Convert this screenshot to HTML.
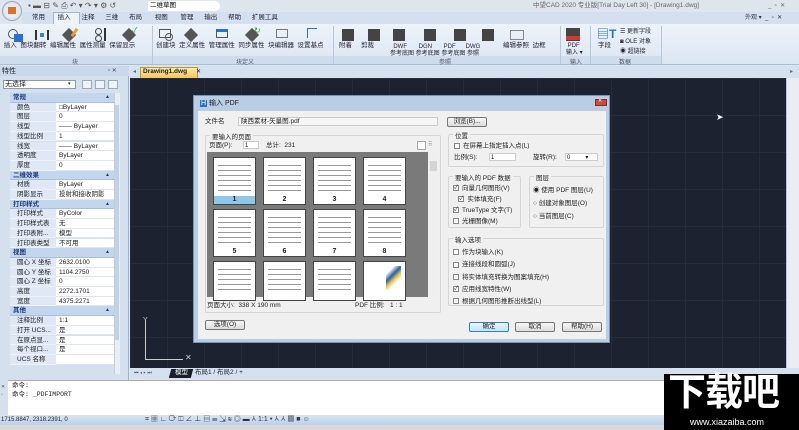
<!DOCTYPE html>
<html><head><meta charset="utf-8"><style>
*{margin:0;padding:0;box-sizing:border-box}
body{width:799px;height:430px;overflow:hidden;position:relative;background:#dfe5ee;font-family:"Liberation Sans","Noto Sans CJK SC",sans-serif;font-size:7px;color:#222}
.a{position:absolute}
.t{position:absolute;white-space:nowrap;line-height:1}
.ib{position:absolute;width:14px;height:12px}
.gl{position:absolute;top:57px;height:7px;font-size:6px;color:#556;text-align:center}
.sep{position:absolute;top:26px;width:1px;height:38px;background:#b8c8dc}
.row{position:absolute;left:10px;width:104px;height:9.7px;font-size:6.5px;line-height:9.7px}
.row .l{position:absolute;left:0;width:46px;height:100%;background:#dfe8f4;padding-left:7px;border-bottom:1px solid #eef3fa}
.row .v{position:absolute;left:46px;width:58px;height:100%;background:#fff;padding-left:3px;border-bottom:1px solid #dde5ef}
.row.h{background:#c3d6ee;color:#1a3a7a;font-weight:bold;padding-left:3px;border-bottom:1px solid #aabfdc}
.thumb{position:absolute;width:43px;height:48px;background:#fff;border:1px solid #444}
.thumb i{position:absolute;left:4px;right:4px;top:4px;bottom:10px;background:repeating-linear-gradient(#fff 0 3px,#999 3px 4px,#fff 4px 5px)}
.thumb b{position:absolute;bottom:0;width:100%;text-align:center;font-size:7px;line-height:8px}
.grp{position:absolute;border:1px solid #d5d5d5;border-radius:2px}
.grp>span.c{position:absolute;top:-5px;left:4px;background:#f0f0f0;padding:0 2px;font-size:6.5px}
.cb{display:inline-block;width:6px;height:6px;border:1px solid #888;background:#fff;vertical-align:middle;margin-right:3px;font-size:6px;line-height:4px;color:#335;text-align:center}
.btn{position:absolute;height:10px;border:1px solid #777;border-radius:2px;background:linear-gradient(#f6f6f6,#dcdcdc);font-size:6.5px;text-align:center;line-height:8px}
</style></head><body>
<!-- title bar -->
<div class="a" style="left:0;top:0;width:799px;height:12px;background:#dde5ef"></div>
<div class="a" style="left:2px;top:1px;width:20px;height:20px;border-radius:50%;background:radial-gradient(#fff,#c9d6e6);border:1px solid #9ab"></div>
<div class="a" style="left:8px;top:7px;width:8px;height:7px;background:#e07020"></div>
<div class="t" style="left:28px;top:2px;font-size:8px;color:#555">▪ ▬ ⊟ ✎ ⎙ ↶ ▾ ↷ ▾ ⚙ ↺</div>
<div class="a" style="left:148px;top:1px;width:72px;height:10px;background:#fff;border-radius:0 5px 5px 0"></div>
<div class="t" style="left:150px;top:3px;font-size:6.5px;color:#000">二维草图</div>
<div class="t" style="left:533px;top:3px;font-size:6.5px;color:#666">中望CAD 2020 专业版[Trial Day Left 30] - [Drawing1.dwg]</div>
<div class="t" style="left:768px;top:3px;font-size:6px;color:#666">_ &nbsp;▫ &nbsp;✕</div>
<!-- tabs -->
<div class="a" style="left:22px;top:12px;width:777px;height:12px;background:#d4e0ef"></div>
<div class="a" style="left:53px;top:12px;width:27px;height:12px;background:#eef3fa;border:1px solid #9fb4cf;border-bottom:none"></div>
<div class="t" style="left:32px;top:15px;font-size:6.5px;color:#223">常用&nbsp;&nbsp;&nbsp;&nbsp;&nbsp;&nbsp;&nbsp;插入&nbsp;&nbsp;&nbsp;&nbsp;&nbsp;&nbsp;注释&nbsp;&nbsp;&nbsp;&nbsp;&nbsp;&nbsp;三维&nbsp;&nbsp;&nbsp;&nbsp;&nbsp;&nbsp;布局&nbsp;&nbsp;&nbsp;&nbsp;&nbsp;&nbsp;&nbsp;视图&nbsp;&nbsp;&nbsp;&nbsp;&nbsp;&nbsp;&nbsp;管理&nbsp;&nbsp;&nbsp;&nbsp;&nbsp;&nbsp;输出&nbsp;&nbsp;&nbsp;&nbsp;&nbsp;&nbsp;帮助&nbsp;&nbsp;&nbsp;&nbsp;&nbsp;&nbsp;扩展工具</div>
<div class="t" style="left:745px;top:15px;font-size:6px;color:#334">外观 ▾ &nbsp;_ &nbsp;▫ &nbsp;✕</div>
<!-- ribbon -->
<div class="a" style="left:0;top:24px;width:799px;height:41px;background:linear-gradient(#eef3fa,#dbe6f3);border-bottom:1px solid #a9bdd6"></div>
<div class="a" style="left:0;top:56px;width:661px;height:8px;background:#cfdcec"></div>
<div class="sep" style="left:152px"></div><div class="sep" style="left:333px"></div><div class="sep" style="left:560px"></div><div class="sep" style="left:590px"></div><div class="sep" style="left:661px"></div>
<div class="gl" style="left:60px;width:30px">块</div>
<div class="gl" style="left:225px;width:40px">块定义</div>
<div class="gl" style="left:430px;width:30px">参照</div>
<div class="gl" style="left:562px;width:28px">输入</div>
<div class="gl" style="left:610px;width:30px">数据</div>
<!-- ribbon icons -->
<div class="ib" style="left:8px;top:29px;border:1px solid #555;border-radius:50%;width:10px;height:10px"></div><div class="ib" style="left:14px;top:34px;width:9px;height:8px;background:#2a6fd8"></div>
<div class="ib" style="left:35px;top:30px;width:14px;height:10px;border-left:2px solid #333;border-right:2px solid #333"></div><div class="a" style="left:40px;top:33px;width:4px;height:4px;background:#3a7de0"></div>
<div class="ib" style="left:64px;top:30px;width:10px;height:10px;background:#555;transform:rotate(45deg)"></div><div class="a" style="left:73px;top:28px;width:3px;height:9px;background:#e9a030;transform:rotate(35deg)"></div>
<div class="ib" style="left:95px;top:28px;width:7px;height:7px;border:1px solid #444;border-radius:50%"></div><div class="a" style="left:95px;top:35px;width:7px;height:7px;border:1px solid #444;border-radius:50%"></div><div class="a" style="left:104px;top:28px;width:2px;height:13px;background:#333"></div>
<div class="ib" style="left:124px;top:30px;width:10px;height:10px;background:#555;transform:rotate(45deg)"></div><div class="t" style="left:132px;top:27px;color:#2a2;font-size:8px">✓</div>
<div class="t" style="left:2px;top:43px;font-size:6.5px;color:#223">&nbsp;插入&nbsp;&nbsp;图块翻转&nbsp;&nbsp;编辑属性&nbsp;&nbsp;属性测量&nbsp;&nbsp;保留显示</div>
<div class="ib" style="left:159px;top:29px;border:1px solid #555;width:12px;height:9px"></div><div class="a" style="left:165px;top:33px;width:8px;height:8px;border:1px solid #555;border-radius:50%"></div>
<div class="ib" style="left:186px;top:30px;width:10px;height:10px;background:#555;transform:rotate(45deg)"></div>
<div class="ib" style="left:216px;top:29px;border:1px solid #555;width:12px;height:9px;border-top:3px solid #2a6fd8"></div>
<div class="ib" style="left:247px;top:30px;width:10px;height:10px;background:#555;transform:rotate(45deg)"></div><div class="t" style="left:254px;top:27px;color:#2a2;font-size:8px">↻</div>
<div class="ib" style="left:276px;top:29px;border:1px solid #777;width:12px;height:9px"></div>
<div class="ib" style="left:307px;top:28px;border-top:1px solid #2a6fd8;border-left:1px solid #2a6fd8;width:10px;height:10px"></div>
<div class="t" style="left:156px;top:43px;font-size:6.5px;color:#223">创建块&nbsp;&nbsp;定义属性&nbsp;&nbsp;管理属性&nbsp;&nbsp;同步属性&nbsp;&nbsp;块编辑器&nbsp;&nbsp;设置基点</div>
<div class="ib" style="left:342px;top:29px;background:#444;width:12px;height:12px"></div>
<div class="ib" style="left:368px;top:29px;background:#444;width:12px;height:12px"></div>
<div class="ib" style="left:393px;top:29px;background:#444;width:12px;height:12px"></div>
<div class="ib" style="left:424px;top:29px;background:#444;width:12px;height:12px"></div>
<div class="ib" style="left:454px;top:29px;background:#444;width:12px;height:12px"></div>
<div class="ib" style="left:482px;top:29px;background:#444;width:12px;height:12px"></div>
<div class="ib" style="left:510px;top:30px;border:1px solid #888;width:14px;height:10px"></div>
<div class="t" style="left:339px;top:43px;font-size:6.5px;color:#223">附着&nbsp;&nbsp;&nbsp;&nbsp;&nbsp;剪裁</div>
<div class="t" style="left:390px;top:44px;font-size:6px;color:#223;line-height:1.2">&nbsp;&nbsp;DWF&nbsp;&nbsp;&nbsp;&nbsp;&nbsp;&nbsp;&nbsp;DGN&nbsp;&nbsp;&nbsp;&nbsp;&nbsp;&nbsp;&nbsp;PDF&nbsp;&nbsp;&nbsp;&nbsp;&nbsp;&nbsp;DWG<br>参考底图 参考底图 参考底图&nbsp;参照</div>
<div class="t" style="left:503px;top:43px;font-size:6.5px;color:#223">编辑参照&nbsp;&nbsp;边框</div>
<div class="ib" style="left:566px;top:28px;background:#444;width:14px;height:13px"></div><div class="a" style="left:566px;top:36px;width:14px;height:4px;background:#d33"></div>
<div class="t" style="left:566px;top:43px;font-size:6px;color:#223;line-height:1.2">&nbsp;PDF<br>输入 ▾</div>
<div class="t" style="left:597px;top:28px;font-size:12px;color:#2a6fd8;font-weight:bold">▤T</div>
<div class="t" style="left:598px;top:43px;font-size:6.5px">字段</div>
<div class="t" style="left:620px;top:27px;font-size:6px;color:#223;line-height:1.7">☰ 更新字段<br>◙ OLE 对象<br>◉ 超链接</div>
<!-- drawing tab bar -->
<div class="a" style="left:130px;top:66px;width:669px;height:12px;background:#d6e1ef"></div>
<div class="a" style="left:140px;top:67px;width:58px;height:11px;background:linear-gradient(#fde9a5,#f6c65a);border:1px solid #b89a40;border-bottom:none"></div>
<div class="t" style="left:143px;top:69px;font-size:6.5px;font-weight:bold;color:#222">Drawing1.dwg</div>
<div class="t" style="left:196px;top:69px;font-size:6px">✕</div>
<div class="t" style="left:133px;top:69px;font-size:6px;color:#667">◂</div>
<div class="t" style="left:790px;top:69px;font-size:6px;color:#667">▸</div>
<!-- left panel -->
<div class="a" style="left:0;top:66px;width:129px;height:314px;background:#d4e0ee;border-right:1px solid #9db3cf"></div>
<div class="a" style="left:0;top:66px;width:129px;height:10px;background:#c9d8ea"></div>
<div class="t" style="left:2px;top:68px;font-size:7px;color:#223">特性</div>
<div class="t" style="left:108px;top:68px;font-size:6px;color:#445">▫ ✕</div>
<div class="a" style="left:3px;top:80px;width:73px;height:9px;background:#fff;border:1px solid #8a9cb3"></div>
<div class="t" style="left:5px;top:81px;font-size:7px">无选择</div>
<div class="t" style="left:68px;top:82px;font-size:5px">▾</div>
<div class="a" style="left:82px;top:80px;width:10px;height:9px;border:1px solid #9ab;background:#eef3fa"></div>
<div class="a" style="left:95px;top:80px;width:10px;height:9px;border:1px solid #9ab;background:#eef3fa"></div>
<div class="a" style="left:108px;top:80px;width:10px;height:9px;border:1px solid #9ab;background:#eef3fa"></div>
<div class="a" style="left:114px;top:93px;width:6px;height:281px;background:#e8eef6;border-left:1px solid #c0cfe0"></div>
<div class="a" style="left:115px;top:105px;width:4px;height:235px;background:#c2d1e4"></div>
<div id="rows"></div>
<!-- canvas -->
<div class="a" style="left:130px;top:78px;width:656px;height:290px;background:#1d2230;background-image:linear-gradient(90deg,#262c3b 1px,transparent 1px),linear-gradient(#262c3b 1px,transparent 1px);background-size:37px 37px"></div>
<div class="a" style="left:786px;top:78px;width:13px;height:290px;background:#eaeef4;border-left:1px solid #b8c4d4"></div>
<div class="a" style="left:145px;top:320px;width:1px;height:40px;background:#ccc"></div>
<div class="a" style="left:145px;top:359px;width:38px;height:1px;background:#ccc"></div>
<div class="t" style="left:143px;top:317px;color:#ccc;font-size:7px">Y</div>
<div class="t" style="left:185px;top:354px;color:#ccc;font-size:8px">✕</div>
<div class="t" style="left:716px;top:113px;color:#fff;font-size:9px">➤</div>
<!-- layout tabs -->
<div class="a" style="left:130px;top:368px;width:669px;height:11px;background:#d6e1ef"></div>
<div class="t" style="left:134px;top:371px;font-size:5px;color:#446">⏮ ◂ ▸ ⏭</div>
<div class="a" style="left:170px;top:369px;width:22px;height:9px;background:#1b1f28;transform:skewX(-15deg)"></div>
<div class="t" style="left:175px;top:370px;font-size:6.5px;color:#fff">模型</div>
<div class="t" style="left:195px;top:370px;font-size:6.5px;color:#223">布局1 / 布局2 / +</div>
<!-- command -->
<div class="a" style="left:0;top:380px;width:799px;height:35px;background:#fff;border-top:1px solid #aab"></div>
<div class="a" style="left:0;top:380px;width:8px;height:35px;background:#d4e0ee"></div>
<div class="t" style="left:1px;top:383px;font-size:5px;color:#556;line-height:1.6">✕<br>▫</div>
<div class="t" style="left:12px;top:382px;font-size:6.5px;line-height:1.35;font-family:'Liberation Mono','Noto Sans CJK SC',monospace">命令:<br>命令: _PDFIMPORT</div>
<div class="a" style="left:0;top:415px;width:799px;height:10px;background:linear-gradient(#d9e5f3,#bcd0ea)"></div>
<div class="t" style="left:1px;top:417px;font-size:6px;color:#223">1715.8847, 2318.2391, 0</div>
<div class="t" style="left:145px;top:416px;font-size:7px;color:#334">⌗ ▦ ∟ ⟳ ◫ ∠ ⊥ ▤ ☰ ⇲ ≋ ◎ ▬ ⅄ 1:1 ▾ ⅄ ⅄ ▩ ■ ☺</div>
<div class="a" style="left:0;top:425px;width:799px;height:5px;background:#d8d8d8"></div>
<!-- watermark -->
<div class="a" style="left:664px;top:374px;width:135px;height:56px;background:#000"></div>
<div class="t" style="left:668px;top:374px;font-size:38px;font-weight:bold;color:#fff;letter-spacing:-1px">下载吧</div>
<div class="t" style="left:690px;top:418px;font-size:9px;color:#fff">www.xiazaiba.com</div>
<!-- dialog -->
<div class="a" style="left:193px;top:95px;width:417px;height:248px;background:#b9cde5;border:1px solid #7d93b3"></div>
<div class="t" style="left:200px;top:100px;font-size:7px;color:#222"><span style="background:#2a6fd8;color:#fff;padding:0 1px">H</span> 输入 PDF</div>
<div class="a" style="left:595px;top:99px;width:12px;height:7px;background:#d04a3a;border:1px solid #8a2a20"></div>
<div class="t" style="left:598px;top:99px;font-size:5px;color:#fff">✕</div>
<div class="a" style="left:198px;top:111px;width:408px;height:228px;background:#f0f0f0"></div>
<div class="t" style="left:205px;top:119px;font-size:6.5px">文件名</div>
<div class="a" style="left:238px;top:117px;width:200px;height:9px;background:#f6f6f6;border:1px solid #ccc"></div>
<div class="t" style="left:241px;top:119px;font-size:6.5px">陕西素材-矢量图.pdf</div>
<div class="btn" style="left:447px;top:117px;width:40px">浏览(B)...</div>
<div class="grp" style="left:205px;top:135px;width:236px;height:178px"><span class="c">要输入的页面</span></div>
<div class="t" style="left:209px;top:143px;font-size:6.5px">页面(P):</div>
<div class="a" style="left:243px;top:141px;width:16px;height:8px;background:#fff;border:1px solid #ccc"></div>
<div class="t" style="left:245px;top:143px;font-size:6px">1</div>
<div class="t" style="left:266px;top:143px;font-size:6.5px">总计: &nbsp;231</div>
<div class="a" style="left:417px;top:141px;width:9px;height:9px;border:1px solid #aaa;background:#fff"></div>
<div class="t" style="left:428px;top:142px;font-size:6px;color:#888">⠿</div>
<div class="a" style="left:207px;top:152px;width:221px;height:145px;background:#7a7a7a"></div>
<div class="a" style="left:429px;top:152px;width:9px;height:145px;background:#efefef"></div>
<div class="a" style="left:430px;top:161px;width:7px;height:10px;background:#d4d4d4"></div>
<div id="thumbs"></div>
<div class="t" style="left:207px;top:303px;font-size:6.5px">页面大小: &nbsp;338 X 190 mm</div>
<div class="t" style="left:355px;top:303px;font-size:6.5px">PDF 比例: &nbsp;&nbsp;1 : 1</div>
<div class="grp" style="left:448px;top:134px;width:156px;height:33px"><span class="c">位置</span></div>
<div class="t" style="left:454px;top:143px;font-size:6.5px"><span class="cb"></span>在屏幕上指定插入点(L)</div>
<div class="t" style="left:454px;top:155px;font-size:6.5px">比例(S):</div>
<div class="a" style="left:489px;top:153px;width:27px;height:8px;background:#fff;border:1px solid #ccc"></div>
<div class="t" style="left:491px;top:155px;font-size:6px">1</div>
<div class="t" style="left:533px;top:155px;font-size:6.5px">旋转(R):</div>
<div class="a" style="left:565px;top:153px;width:33px;height:8px;background:#fff;border:1px solid #ccc"></div>
<div class="t" style="left:567px;top:155px;font-size:6px">0 &nbsp;&nbsp;&nbsp;&nbsp;&nbsp;&nbsp;&nbsp;&nbsp;▾</div>
<div class="grp" style="left:448px;top:176px;width:73px;height:52px"><span class="c">要输入的 PDF 数据</span></div>
<div class="t" style="left:453px;top:183px;font-size:6.5px;line-height:11px"><span class="cb">✓</span>向量几何图形(V)<br>&nbsp;&nbsp;&nbsp;<span class="cb">✓</span>实体填充(F)<br><span class="cb">✓</span>TrueType 文字(T)<br><span class="cb"></span>光栅图像(M)</div>
<div class="grp" style="left:529px;top:176px;width:75px;height:52px"><span class="c">图层</span></div>
<div class="t" style="left:533px;top:184px;font-size:6.5px;line-height:13px">◉ 使用 PDF 图层(U)<br>○ 创建对象图层(O)<br>○ 当前图层(C)</div>
<div class="grp" style="left:448px;top:238px;width:156px;height:68px"><span class="c">输入选项</span></div>
<div class="t" style="left:453px;top:247px;font-size:6.5px;line-height:12.3px"><span class="cb"></span>作为块输入(K)<br><span class="cb"></span>连接线段和圆弧(J)<br><span class="cb"></span>将实体填充转换为图案填充(H)<br><span class="cb">✓</span>应用线宽特性(W)<br><span class="cb"></span>根据几何图形推断出线型(L)</div>
<div class="btn" style="left:205px;top:320px;width:40px">选项(O)</div>
<div class="btn" style="left:469px;top:322px;width:40px;border-color:#3c7fb1;background:linear-gradient(#eaf6fd,#bee6fd)">确定</div>
<div class="btn" style="left:515px;top:322px;width:40px">取消</div>
<div class="btn" style="left:562px;top:322px;width:40px">帮助(H)</div>
<script>
var rows=[['h','常规'],['颜色','□ByLayer'],['图层','0'],['线型','—— ByLayer'],['线型比例','1'],['线宽','—— ByLayer'],['透明度','ByLayer'],['厚度','0'],
['h','二维效果'],['材质','ByLayer'],['阴影显示','投射和接收阴影'],['h','打印样式'],['打印样式','ByColor'],['打印样式表','无'],['打印表附...','模型'],['打印表类型','不可用'],
['h','视图'],['圆心 X 坐标','2632.0100'],['圆心 Y 坐标','1104.2750'],['圆心 Z 坐标','0'],['高度','2272.1701'],['宽度','4375.2271'],
['h','其他'],['注释比例','1:1'],['打开 UCS...','是'],['在原点显...','是'],['每个视口...','是'],['UCS 名称','']];
var h='';rows.forEach(function(r,i){var y=93+i*9.7;if(r[0]=='h')h+='<div class="row h" style="top:'+y+'px">'+r[1]+'<span style="position:absolute;right:4px;font-size:5px">▲</span></div>';else h+='<div class="row" style="top:'+y+'px"><div class="l">'+r[0]+'</div><div class="v">'+r[1]+'</div></div>';});
document.getElementById('rows').innerHTML=h;
var t='';for(var r=0;r<3;r++)for(var c=0;c<4;c++){var n=r*4+c+1;var x=213+c*50,y=157+r*52;var hh=r==2?40:48;
t+='<div class="thumb" style="left:'+x+'px;top:'+y+'px;height:'+hh+'px">'+(n==12?'<i style="left:22px;background:linear-gradient(135deg,#fff 20%,#2b5fa8 40%,#e8c84a 55%,#fff 70%)"></i>':'<i></i>')+(r<2?'<b'+(n==1?' style="background:#8fc7ea"':'')+'>'+n+'</b>':'')+'</div>';}
document.getElementById('thumbs').innerHTML=t;
</script>
</body></html>
